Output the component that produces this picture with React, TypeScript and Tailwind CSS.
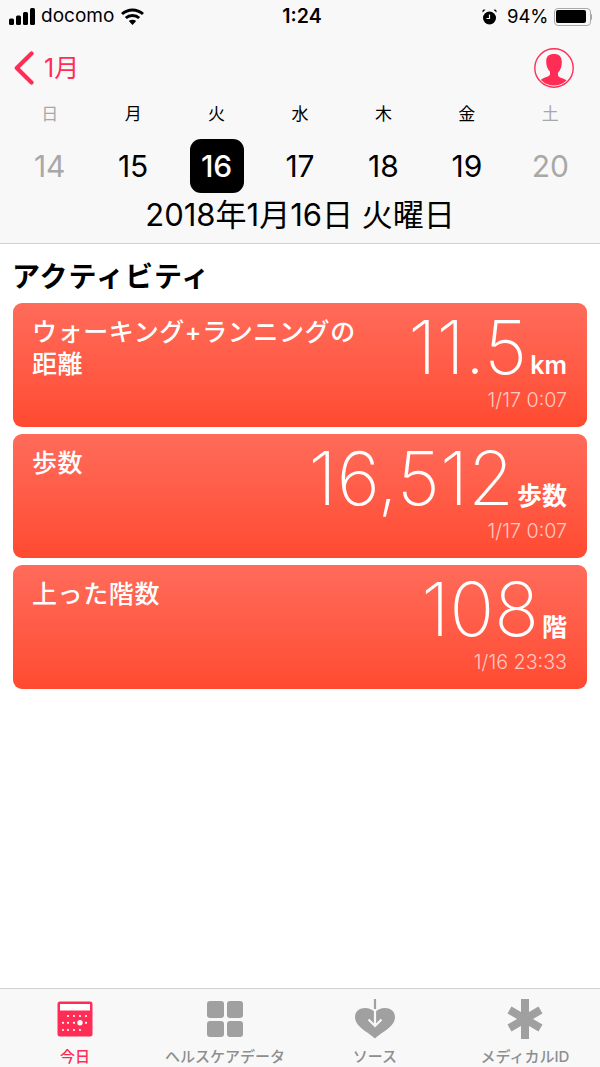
import React from 'react';

const JP = "font-['Inter','Noto_Sans_CJK_JP',sans-serif]";

const days = [
  { label: '日', num: 14, muted: true },
  { label: '月', num: 15 },
  { label: '火', num: 16, selected: true },
  { label: '水', num: 17 },
  { label: '木', num: 18 },
  { label: '金', num: 19 },
  { label: '土', num: 20, muted: true },
];

const cards = [
  { title: 'ウォーキング+ランニングの距離', value: '11.5', unit: 'km', time: '1/17 0:07' },
  { title: '歩数', value: '16,512', unit: '歩数', time: '1/17 0:07' },
  { title: '上った階数', value: '108', unit: '階', time: '1/16 23:33' },
];

const SignalIcon = () => (
  <svg width="26" height="17" viewBox="0 0 26 17" fill="currentColor">
    <rect x="0" y="10.500" width="5" height="6.500" rx="1.500" />
    <rect x="7" y="7.500" width="5" height="9.500" rx="1.500" />
    <rect x="14" y="4" width="5" height="13" rx="1.500" />
    <rect x="21" y="0" width="5" height="17" rx="1.500" />
  </svg>
);

const WifiIcon = () => (
  <svg width="23" height="17" viewBox="0 0 23 17" fill="none" stroke="currentColor" strokeWidth="3">
    <path d="M1 6 C7 0.500 16 0.500 22 6" />
    <path d="M4.800 10 C8.500 6.500 14.500 6.500 18.200 10" />
    <path d="M11.500 17 L7.800 13 C10 11.200 13 11.200 15.200 13 Z" fill="currentColor" stroke="none" />
  </svg>
);

const AlarmIcon = () => (
  <svg width="15" height="16" viewBox="0 0 15 16" fill="currentColor">
    <circle cx="7.500" cy="9" r="6.500" />
    <path d="M0.500 3.500 L3.500 0.800 L1.600 0.500 Q0 1 0.500 3.500Z M14.500 3.500 L11.500 0.800 L13.400 0.500 Q15 1 14.500 3.500Z" />
    <path d="M7.500 5.500 V9.500 H4.500" fill="none" stroke="#f8f8f8" strokeWidth="1.200" />
  </svg>
);

const BatteryIcon = () => (
  <div className="flex items-center">
    <div className="w-[37px] h-[18px] rounded-[4px] border-[1.500px] border-[#a8a8a8] p-[1.500px]">
      <div className="h-full w-[94%] rounded-[2px] bg-black" />
    </div>
    <div className="w-[1.500px] h-[6px] bg-[#a8a8a8] rounded-r-sm" />
  </div>
);

const ProfileIcon = () => (
  <svg width="40" height="40" viewBox="0 0 40 40">
    <defs>
      <clipPath id="profile-clip">
        <circle cx="20" cy="20" r="17.600" />
      </clipPath>
    </defs>
    <circle cx="20" cy="20" r="19.200" fill="none" stroke="#ff2d55" strokeWidth="1.400" />
    <g fill="#ff2d55" clipPath="url(#profile-clip)">
      <path d="M20 6c-5 0-7.800 2.500-7.800 7 0 3 .5 5.400 1.400 7.300.7 1.500 1.500 2.700 2.400 3.500v2.400c0 1.300-1.400 2-3.600 2.700-3 1-5.400 2-6.400 4L9 40h22l3-6.100c-1-2-3.400-3-6.400-4-2.200-.7-3.600-1.400-3.600-2.700v-2.400c.9-.8 1.700-2 2.400-3.500.9-1.900 1.400-4.300 1.400-7.300C27.800 8.500 25 6 20 6z" />
    </g>
  </svg>
);

const CalendarIcon = () => (
  <svg width="36" height="36" viewBox="0 0 36 36">
    <rect x="0.500" y="0.500" width="35" height="35" rx="2.500" fill="#ff2d55" />
    <rect x="3" y="3" width="30" height="6.500" fill="#fff" />
    <g fill="#fff">
      {[11, 17, 23, 29].map(x => <circle key={x} cx={x} cy="15" r="1.100" />)}
      {[6, 11, 17, 29].map(x => <circle key={x} cx={x} cy="21.800" r="1.100" />)}
      <circle cx="23" cy="21.800" r="2.700" />
      {[6, 11, 17, 23].map(x => <circle key={x} cx={x} cy="29" r="1.100" />)}
    </g>
  </svg>
);

const GridIcon = () => (
  <div className="grid grid-cols-2 gap-[3px] w-[36px] h-[36px]">
    <div className="rounded-[3px] bg-[#a0a0a0]" />
    <div className="rounded-[3px] bg-[#a0a0a0]" />
    <div className="rounded-[3px] bg-[#a0a0a0]" />
    <div className="rounded-[3px] bg-[#a0a0a0]" />
  </div>
);

const SourcesIcon = () => (
  <svg width="42" height="40" viewBox="0 0 42 40">
    <path d="M21 39.500 C15 33.500 1 28 1 18 C1 12 6 9 11 9 C15 9 19 10.500 21 13.500 C23 10.500 27 9 31 9 C36 9 41 12 41 18 C41 28 27 33.500 21 39.500Z" fill="#a0a0a0" />
    <path d="M21 9 V27 M14.500 20.500 L21 27 L27.500 20.500" fill="none" stroke="#f8f8f8" strokeWidth="2.200" />
    <path d="M21 0 V10" stroke="#a0a0a0" strokeWidth="2.200" />
  </svg>
);

const AsteriskIcon = () => (
  <svg width="40" height="40" viewBox="0 0 40 40" fill="none" stroke="#a0a0a0" strokeWidth="8" strokeLinecap="butt">
    <path d="M20 0 V40" />
    <path d="M4.500 11 L35.500 29" />
    <path d="M35.500 11 L4.500 29" />
  </svg>
);

const tabs = [
  { label: '今日', icon: <CalendarIcon />, active: true },
  { label: 'ヘルスケアデータ', icon: <GridIcon /> },
  { label: 'ソース', icon: <SourcesIcon /> },
  { label: 'メディカルID', icon: <AsteriskIcon /> },
];

const ActivityCard: React.FC<{ title: string; value: string; unit: string; time: string }> = ({ title, value, unit, time }) => (
  <div className="h-[124px] rounded-[9px] bg-gradient-to-b from-[#ff6b5a] to-[#ff4a30] pl-[20px] pr-[20px] pt-[13px] flex justify-between text-white">
    <div className="w-[330px] -ml-[1px] text-[25px] leading-[32px] font-medium tracking-[0.600px]">{title}</div>
    <div className="flex flex-col items-end">
      <div className="flex items-baseline gap-[3px] h-[60px] mt-[1px] whitespace-nowrap">
        <span className="text-[74px] leading-[60px] font-[250] tracking-[0.100px]">{value}</span>
        <span className="text-[25px] leading-[30px] font-semibold">{unit}</span>
      </div>
      <div className="mt-[11px] text-[19.700px] leading-[24px] text-white/70 font-light">{time}</div>
    </div>
  </div>
);

export default function App() {
  return (
    <div className={`w-[600px] h-[1067px] flex flex-col bg-white text-black overflow-hidden ${JP}`}>
      <header className="h-[244px] shrink-0 bg-[#f8f8f8] border-b border-[#d2d2d2]">
        <div className="relative h-[33px] pl-[9px] pr-[8px] flex items-center justify-between text-[19px]">
          <div className="flex items-center gap-[6px]">
            <SignalIcon />
            <span>docomo</span>
            <span className="ml-[1px]"><WifiIcon /></span>
          </div>
          <div className="absolute left-[4px] right-0 text-center font-semibold text-[19.500px]">1:24</div>
          <div className="flex items-center gap-[10px]">
            <AlarmIcon />
            <span className="text-[18.500px] -mr-[5px]">94%</span>
            <BatteryIcon />
          </div>
        </div>
        <div className="h-[54px] mt-[8px] pl-[14px] pr-[26px] flex items-center justify-between text-[#ff2d55]">
          <div className="flex items-center gap-[10px]">
            <svg width="20" height="34" viewBox="0 0 20 34" fill="none" stroke="currentColor" strokeWidth="4.200" strokeLinecap="round" strokeLinejoin="round">
              <path d="M17.500 2.500 L2.800 17 L17.500 31.500" />
            </svg>
            <span className="text-[25px] leading-none">1月</span>
          </div>
          <ProfileIcon />
        </div>
        <div className="grid grid-cols-7 px-[8px] mt-[4px]">
          {days.map(d => (
            <div key={d.num} className="flex flex-col items-center">
              <div className={`h-[30px] leading-[30px] text-[17px] ${d.muted ? 'text-[#a8a8a8]' : 'text-black'}`}>{d.label}</div>
              <div className={`w-[54px] h-[54px] mt-[10px] flex items-center justify-center text-[30px] rounded-[11px] ${d.selected ? 'bg-black text-white font-medium' : d.muted ? 'text-[#a8a8a8]' : 'text-black'}`}>{d.num}</div>
            </div>
          ))}
        </div>
        <div className="text-center text-[31px] leading-[44px] whitespace-nowrap">2018年1月16日 火曜日</div>
      </header>
      <main className="flex-1 px-[13px]">
        <h2 className="text-[28px] leading-[34px] font-bold -ml-[1px] mt-[16px] mb-[9px] tracking-[1px]">アクティビティ</h2>
        <div className="flex flex-col gap-[7px]">
          {cards.map(c => <ActivityCard key={c.title} {...c} />)}
        </div>
      </main>
      <nav className="h-[79px] shrink-0 bg-[#f8f8f8] border-t border-[#d2d2d2] grid grid-cols-4">
        {tabs.map(t => (
          <div key={t.label} className="flex flex-col items-center">
            <div className="h-[60px] flex items-center justify-center">{t.icon}</div>
            <div className={`text-[15px] leading-[15px] font-medium whitespace-nowrap ${t.active ? 'text-[#ff2d55]' : 'text-[#8e8e8e]'}`}>{t.label}</div>
          </div>
        ))}
      </nav>
    </div>
  );
}
